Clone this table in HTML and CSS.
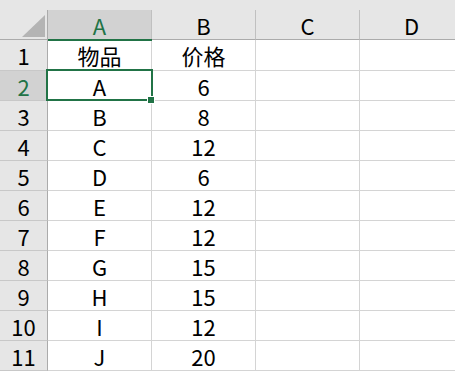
FILE: index.html
```html
<!DOCTYPE html>
<html lang="zh-CN">
<head>
  <meta charset="UTF-8">
  <title>工作表</title>
  <link rel="stylesheet" href="styles.css">
</head>
<body>

  <!-- 表头上方的留白 -->
  <div class="strip"></div>

  <div class="sheet">
    <!-- 列标 -->
    <div class="corner"><span class="tri"></span></div>
    <div class="col-head on">A</div>
    <div class="col-head">B</div>
    <div class="col-head">C</div>
    <div class="col-head">D</div>

    <div class="row-head">1</div>
    <div class="cell">物品</div>
    <div class="cell">价格</div>
    <div class="cell"></div>
    <div class="cell"></div>

    <div class="row-head on">2</div>
    <div class="cell active">A<span class="sel-box"></span><span class="fill-handle"></span></div>
    <div class="cell">6</div>
    <div class="cell"></div>
    <div class="cell"></div>

    <div class="row-head">3</div>
    <div class="cell">B</div>
    <div class="cell">8</div>
    <div class="cell"></div>
    <div class="cell"></div>

    <div class="row-head">4</div>
    <div class="cell">C</div>
    <div class="cell">12</div>
    <div class="cell"></div>
    <div class="cell"></div>

    <div class="row-head">5</div>
    <div class="cell">D</div>
    <div class="cell">6</div>
    <div class="cell"></div>
    <div class="cell"></div>

    <div class="row-head">6</div>
    <div class="cell">E</div>
    <div class="cell">12</div>
    <div class="cell"></div>
    <div class="cell"></div>

    <div class="row-head">7</div>
    <div class="cell">F</div>
    <div class="cell">12</div>
    <div class="cell"></div>
    <div class="cell"></div>

    <div class="row-head">8</div>
    <div class="cell">G</div>
    <div class="cell">15</div>
    <div class="cell"></div>
    <div class="cell"></div>

    <div class="row-head">9</div>
    <div class="cell">H</div>
    <div class="cell">15</div>
    <div class="cell"></div>
    <div class="cell"></div>

    <div class="row-head">10</div>
    <div class="cell">I</div>
    <div class="cell">12</div>
    <div class="cell"></div>
    <div class="cell"></div>

    <div class="row-head">11</div>
    <div class="cell">J</div>
    <div class="cell">20</div>
    <div class="cell"></div>
    <div class="cell"></div>
  </div>

</body>
</html>
```

FILE: styles.css
```css
body {
  margin: 0;
  overflow: hidden;
  background: #fff;
  color: #000;
  font-family: "Noto Sans CJK SC", "Noto Sans", sans-serif;
  font-size: 22px;
}

.strip {
  height: 10px;
  background: #e6e6e6;
}

.sheet {
  display: grid;
  grid-template-columns: 48px repeat(4, 104px);
  grid-template-rows: 30px 31px repeat(10, 30px);
}

.sheet > div {
  box-sizing: border-box;
  display: flex;
  align-items: center;
  justify-content: center;
  line-height: 22px;
}

.cell {
  border-right: 1px solid #d4d4d4;
  border-bottom: 1px solid #d4d4d4;
}

.corner {
  background: #e6e6e6;
  border-right: 1px solid #ababab;
  border-bottom: 1px solid #ababab;
}

.sheet > .corner {
  justify-content: flex-end;
  align-items: flex-end;
  padding: 0 2px 2px 0;
}

.tri {
  width: 23px;
  height: 22px;
  background: #b4b4b4;
  clip-path: polygon(100% 0, 100% 100%, 0 100%);
}

.col-head {
  background: #e6e6e6;
  border-right: 1px solid #c0c0c0;
  border-bottom: 1px solid #ababab;
}

.row-head {
  background: #e6e6e6;
  border-right: 1px solid #ababab;
  border-bottom: 1px solid #c8c8c8;
}

.col-head.on,
.row-head.on {
  background: #d2d2d2;
  color: #217346;
}

.col-head.on {
  position: relative;
}

.col-head.on::after {
  content: "";
  position: absolute;
  left: 0;
  right: -1px;
  bottom: -2px;
  height: 2px;
  background: #217346;
}

/* 当前选中单元格 */
.active {
  position: relative;
}

.sel-box {
  position: absolute;
  top: -2px;
  left: -2px;
  right: -2px;
  bottom: -1px;
  border: 2px solid #217346;
}

.fill-handle {
  position: absolute;
  left: 99px;
  top: 25px;
  width: 6px;
  height: 6px;
  background: #217346;
  border: 1px solid #fff;
}
```
